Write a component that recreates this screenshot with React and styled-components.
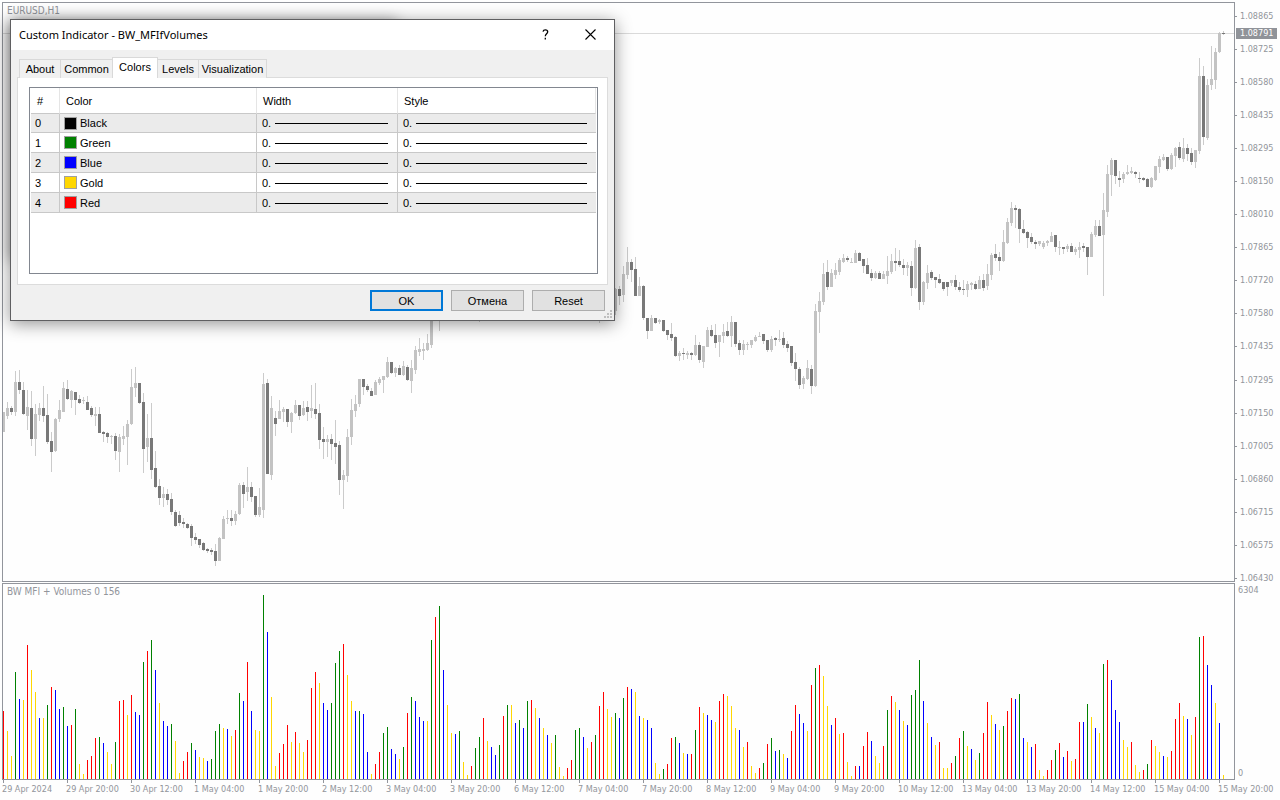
import { useState } from "react"
import styled, { createGlobalStyle, css } from "styled-components"

const STEP = 4

// each candle: direction (u / d), high, body top, body bottom, low
const CANDLES = [
  {
    start: 0,
    data: `u412,412,432,432 u402,408,416,419 d406,408,412,415 u371,382,412,416 d370,382,390,394
      d382,390,414,415 u390,407,416,430 d391,408,439,446 u404,414,439,456 u403,408,415,421
      d386,408,416,422 d394,415,442,444 d432,441,452,472 u418,419,451,452 u400,410,419,422
      u382,388,412,412 d380,389,399,400 u390,391,400,408 d392,392,400,415 d395,399,403,404
      u397,400,401,404 d396,402,410,410 d406,408,415,417 u407,414,416,426 d407,414,433,433
      d431,432,434,442 d432,433,437,443 u435,436,437,444 d433,436,451,460 u434,437,452,472
      u426,436,439,445 u420,424,437,465 u369,387,424,425 u367,383,388,397 d383,383,403,404
      d393,402,449,473 u414,438,447,462 d403,438,470,479 d451,468,487,488 d479,486,498,505
      u487,494,498,507 d489,494,500,505 d493,499,512,515 d510,512,526,527 d511,515,523,526
      d518,522,524,528 d523,524,528,529 d524,526,538,546 d533,537,540,544 d539,539,545,548
      d542,543,550,551 d548,549,551,553 d548,550,552,555 d544,551,561,566 u537,538,561,561
      u516,519,539,539 u510,518,519,524 d510,518,521,526 u511,514,521,525 u483,485,514,515
      d482,485,494,508 u467,487,492,501 d482,487,497,502 d496,496,515,517 u488,507,515,517
      u373,384,510,518 d379,383,474,474 u396,408,475,480 d411,418,424,436 u400,411,419,419
      u407,409,412,422 d409,409,422,427 u412,413,422,433 u400,405,413,414 d405,405,416,420
      u401,408,415,416 d401,407,412,421 u385,408,411,418 d383,409,414,419 d404,413,440,449
      d427,439,442,459 u435,439,442,457 d434,439,444,460 d420,443,447,464 d441,445,480,495
      u470,475,480,509 u429,437,476,482 u399,410,437,445 u395,404,411,417 u379,379,404,407
      d379,379,387,395 d384,386,390,392 d388,391,396,396 u380,382,395,395 u377,379,383,385
      u376,376,380,393 u357,362,377,378 d362,362,373,374 u367,368,373,377 d365,368,375,375
      u361,366,375,376 d365,367,380,381 u360,368,381,393 u346,350,370,374 u338,349,352,356
      u343,349,351,360 u334,343,350,351 u300,306,345,348`,
  },
  { start: 109, data: "u290,300,316,331" },
  { start: 119, data: "d296,302,312,322" },
  { start: 149, data: "u290,300,312,323" },
  { start: 152, data: "d290,300,310,321" },
  {
    start: 153,
    data: `u288,289,311,315 d286,289,296,305 u266,274,295,302 u247,262,275,279 d259,262,270,282
      d257,269,296,296 u277,286,296,296 d285,286,318,320 d318,318,331,339 u315,318,331,331
      d318,318,323,324 u319,320,322,324 d320,320,331,332 d330,330,335,340 d323,334,338,341
      d336,337,356,357 u351,353,356,361 d348,353,354,360 u351,353,355,359 d352,353,355,360
      u335,345,355,356 d342,345,360,363 u346,346,362,368 u327,330,347,347 d325,330,336,337
      d324,335,343,348 u335,335,342,357 u324,332,336,343 d322,331,336,337 u316,322,336,347
      d322,322,344,347 d340,343,350,355 u340,344,350,355 u342,344,345,350 u340,340,345,348
      u335,337,341,342 u332,336,337,337 d334,334,341,344 d340,340,350,352 u336,339,350,352
      d337,338,340,346 u330,339,340,342 d332,338,345,348 d341,344,348,352 d346,346,363,366
      d353,362,369,381 d367,369,385,389 u376,378,384,389 u360,368,379,380 d365,369,386,394
      u304,311,386,387 u292,301,312,333 u263,274,302,305 d260,272,287,290 u269,273,287,287
      u263,270,275,279 u258,260,272,275 u254,258,262,263 d256,258,260,262 u258,262,263,263
      u250,253,263,263 d252,253,261,261 d259,259,266,273 d258,265,274,274 d269,273,278,281
      u271,273,278,279 d271,273,279,279 u271,274,279,279 u256,271,276,284 u254,261,272,274
      d248,261,263,271 d250,261,265,267 d259,265,268,275 u262,265,268,276 d261,266,288,296
      u240,248,288,289 d244,247,302,310 u281,282,302,305 u265,273,283,289 d270,272,278,280
      d277,277,280,288 d274,279,283,284 d282,282,289,291 d282,282,287,296 u280,280,283,286
      d275,280,287,290 d282,287,290,292 d280,289,290,295 u281,284,290,297 u282,283,285,290
      d281,284,289,290 u276,280,289,289 d274,280,288,291 u264,274,286,290 u253,255,275,280
      d244,254,258,261 d252,257,261,271 u230,242,261,262 u218,222,243,244 u202,208,223,226
      d205,208,210,228 d208,209,229,243 d220,229,233,234 d231,232,238,248 d233,237,242,244
      d240,242,244,249 u241,241,244,246 u241,243,247,249 u240,241,243,246 u232,236,242,242
      d235,235,247,252 u241,247,248,255 d247,247,249,254 u244,246,249,252 d243,246,252,252
      u247,249,252,255 u242,247,250,258 d243,246,248,252 d247,247,257,275 u232,234,257,257
      u220,226,235,237 d220,226,236,236 u193,210,235,296 u165,174,212,217 u158,160,175,196
      d160,160,176,184 d171,178,180,187 u172,174,179,183 u165,172,174,175 u167,171,173,174
      d171,172,174,178 d172,178,179,183 d177,178,180,181 d178,179,187,187 u177,178,187,188
      u166,166,180,181 u156,159,167,173 u154,157,160,161 d157,157,169,171 u153,155,169,170
      u147,148,156,167 d142,147,158,160 u138,148,159,162 d144,148,154,161 d148,153,162,165
      u150,150,162,168 u58,76,151,154 d66,76,137,145 u79,85,138,140 u46,79,85,90
      u48,52,80,89 u32,33,52,53 d31,33,34,35`,
  },
]

// volume bars: color letter + height
const VOLUMES = `r68 y48 y23 g107 b80 y79 r134 y109 y87 b61 y61 g74 r92 b89 b70 g72 b53 r54 g70 y15
  y5 r19 r23 r41 g42 b36 y27 y15 g37 r78 r79 y64 r84 b67 b64 g117 r128 g139 b109 y76
  b58 b53 g55 y38 y6 r18 r27 g36 b29 y22 y21 b18 g20 g48 g55 y51 b50 y43 r49 g86
  b78 r117 b68 y49 y48 g184 b147 y82 y13 r26 r35 r54 y37 r47 y36 y27 r39 r91 r107 y96
  b76 b69 g76 g116 g128 r135 y104 y78 b68 g68 b65 b27 y5 r15 r27 g46 g52 b30 b25 y20
  g32 r66 g82 b78 b62 b58 y58 g139 r162 g173 b109 y74 y46 b45 g48 y17 y4 r13 g31 g42
  r61 y38 b32 b24 g34 r63 g74 y74 b56 g59 b51 g78 r79 y71 b61 y51 b44 y36 g44 y12
  y3 r11 r19 g49 g51 b42 y31 r37 g44 r73 r87 y70 y62 g66 b61 g81 r92 b90 y87 b63
  y61 b59 b51 y16 y5 g10 r15 r41 g42 b36 y26 b25 r25 g49 r72 y66 b64 b59 y57 r78
  r85 y83 y73 y51 b49 y32 r37 y13 y6 r11 g16 r35 g41 b28 g29 y25 b21 r48 r74 b65
  b56 y48 r94 g111 r114 y103 y73 b54 r61 y45 r46 y17 y3 r13 b13 r33 r47 b38 y23 y16
  r33 g69 r83 y77 b69 y58 b54 g84 g89 g119 b78 y56 b42 y34 r37 y11 y11 r16 g23 r41
  g48 y33 b30 y19 g26 r46 r77 y64 b55 y49 g53 r68 r81 b80 g85 b41 y37 b32 r35 y9
  y3 r9 r19 g29 r36 b22 r28 y18 r20 r57 b57 g75 y62 b51 y46 g115 r119 b99 b69 b57
  y39 y32 r37 y14 y7 r9 g15 r39 y33 y27 b23 y22 r28 r60 r76 y63 b60 y44 r62 g142
  r143 b114 b94 y76 b56 y4`

const BAR_COLORS = { r: "#ff0000", g: "#008000", b: "#0000ff", y: "#ffd700" }

const PRICES = [
  "1.08865", "1.08725", "1.08580", "1.08435", "1.08295", "1.08150",
  "1.08010", "1.07865", "1.07720", "1.07580", "1.07435", "1.07295",
  "1.07150", "1.07005", "1.06860", "1.06715", "1.06575", "1.06430",
]

const TIMES = [
  "29 Apr 2024", "29 Apr 20:00", "30 Apr 12:00", "1 May 04:00", "1 May 20:00",
  "2 May 12:00", "3 May 04:00", "3 May 20:00", "6 May 12:00", "7 May 04:00",
  "7 May 20:00", "8 May 12:00", "9 May 04:00", "9 May 20:00", "10 May 12:00",
  "13 May 04:00", "13 May 20:00", "14 May 12:00", "15 May 04:00", "15 May 20:00",
]

const TABS = [
  { name: "About", width: 42 },
  { name: "Common", width: 53 },
  { name: "Colors", width: 46 },
  { name: "Levels", width: 42 },
  { name: "Visualization", width: 69 },
]

const COLORS = [
  { name: "Black", value: "#000000" },
  { name: "Green", value: "#008000" },
  { name: "Blue", value: "#0000ff" },
  { name: "Gold", value: "#ffd700" },
  { name: "Red", value: "#ff0000" },
]

const Candle = ({ index, source }) => {
  const [high, top, bottom, low] = source.slice(1).split(",").map(Number)
  const x = index * STEP
  return (
    <g>
      <rect x={x} y={high} width="1" height={low - high} fill="#cbcbcb" />
      <rect
        x={x - 1}
        y={top}
        width="3"
        height={bottom - top}
        fill={source[0] === "u" ? "#c3c3c3" : "#787878"}
      />
    </g>
  )
}

const PriceChart = () => (
  <ChartSvg $height={578} aria-label="EURUSD hourly candles">
    <g transform="translate(0 -3)">
      <rect x="0" y="33" width="100%" height="1" fill="#dadada" />
      {CANDLES.map(({ start, data }) =>
        data
          .split(/\s+/)
          .map((source, i) => <Candle key={start + i} index={start + i} source={source} />)
      )}
    </g>
  </ChartSvg>
)

const VolumeChart = () => (
  <ChartSvg $height={195} aria-label="BW MFI volumes">
    {VOLUMES.split(/\s+/).map((bar, i) => {
      const height = Number(bar.slice(1))
      return (
        <rect
          key={i}
          x={i * STEP}
          y={195 - height}
          width="1"
          height={height}
          fill={BAR_COLORS[bar[0]]}
        />
      )
    })}
  </ChartSvg>
)

const IndicatorDialog = () => {
  const [tab, setTab] = useState("Colors")

  return (
    <Dialog role="dialog" aria-labelledby="dialog-title">
      <TitleBar>
        <Title id="dialog-title">Custom Indicator - BW_MFIfVolumes</Title>
        <TitleButton type="button" aria-label="Help">
          <svg width="7" height="11" viewBox="0 0 7 11" fill="none" stroke="#000" strokeWidth="1.3">
            <path d="M1 2.6C1.3 1.3 2.1.8 3.3.8 4.8.8 5.7 1.6 5.7 2.8 5.7 4.7 3.3 4.9 3.3 7.3" />
            <path d="M3.3 8.8v1.7" />
          </svg>
        </TitleButton>
        <TitleButton type="button" aria-label="Close">
          <svg width="11" height="11" viewBox="0 0 11 11" fill="none" stroke="#000" strokeWidth="1.1">
            <path d="M.5.5l10 10M10.5.5l-10 10" />
          </svg>
        </TitleButton>
      </TitleBar>
      <DialogBody>
        <TabList role="tablist">
          {TABS.map(({ name, width }) => (
            <Tab
              key={name}
              type="button"
              role="tab"
              aria-selected={tab === name}
              $active={tab === name}
              $width={width}
              onClick={() => setTab(name)}
            >
              {name}
            </Tab>
          ))}
        </TabList>
        <TabPanel role="tabpanel">
          <TableBox>
            <Table>
              <colgroup>
                <Col $width={29} />
                <Col $width={197} />
                <Col $width={141} />
                <Col />
              </colgroup>
              <thead>
                <tr>
                  <HeadCell>#</HeadCell>
                  <HeadCell>Color</HeadCell>
                  <HeadCell>Width</HeadCell>
                  <HeadCell>Style</HeadCell>
                </tr>
              </thead>
              <tbody>
                {COLORS.map(({ name, value }, i) => (
                  <Row key={name}>
                    <Cell>{i}</Cell>
                    <Cell>
                      <CellContent $gap={3}>
                        <Swatch $color={value} />
                        {name}
                      </CellContent>
                    </Cell>
                    <Cell>
                      <CellContent $gap={4} $indent={1}>
                        0.
                        <LineSample />
                      </CellContent>
                    </Cell>
                    <Cell>
                      <CellContent $gap={4} $indent={1}>
                        0.
                        <LineSample />
                      </CellContent>
                    </Cell>
                  </Row>
                ))}
              </tbody>
            </Table>
          </TableBox>
        </TabPanel>
        <Footer>
          <DialogButton type="button" $primary>
            OK
          </DialogButton>
          <DialogButton type="button">Отмена</DialogButton>
          <DialogButton type="button">Reset</DialogButton>
        </Footer>
      </DialogBody>
      <Grip width="8" height="8" viewBox="0 0 8 8" fill="#bfbfbf" aria-hidden="true">
        <path d="M6 0h2v2H6zM3 3h2v2H3zM6 3h2v2H6zM0 6h2v2H0zM3 6h2v2H3zM6 6h2v2H6z" />
      </Grip>
    </Dialog>
  )
}

export default function App() {
  return (
    <>
      <GlobalStyle />
      <Terminal>
        <Pane>
          <PaneLabel>EURUSD,H1</PaneLabel>
          <PriceChart />
        </Pane>
        <PriceAxis>
          <PriceList>
            {PRICES.map((price) => (
              <Price key={price}>{price}</Price>
            ))}
          </PriceList>
          <CurrentPrice>1.08791</CurrentPrice>
        </PriceAxis>
        <Pane>
          <PaneLabel>BW MFI + Volumes 0 156</PaneLabel>
          <VolumeChart />
        </Pane>
        <VolumeAxis>
          <span>6304</span>
          <span>0</span>
        </VolumeAxis>
        <TimeAxis>
          {TIMES.map((time) => (
            <Time key={time}>{time}</Time>
          ))}
        </TimeAxis>
        <ParentShadow />
        <IndicatorDialog />
      </Terminal>
    </>
  )
}

const GlobalStyle = createGlobalStyle`
  * {
    box-sizing: border-box;
  }
  body {
    margin: 0;
    background: #fefefe;
  }
`

const chartText = css`
  font-family: "DejaVu Sans Condensed", "DejaVu Sans", sans-serif;
  font-size: 9px;
  line-height: 11px;
  color: #92959b;
`

const Terminal = styled.main`
  position: relative;
  display: grid;
  grid-template-columns: minmax(0, 1fr) 45px;
  row-gap: 1px;
  padding: 2px 0 0 2px;
  min-height: 100vh;
  align-content: start;
  overflow: hidden;
  ${chartText}
`
const Pane = styled.section`
  position: relative;
  border: 1px solid #92959c;
`
const PaneLabel = styled.div`
  position: absolute;
  top: 2px;
  left: 4px;
  font-size: 10px;
  line-height: 12px;
`
const ChartSvg = styled.svg`
  display: block;
  width: 100%;
  height: ${(props) => props.$height}px;
  shape-rendering: crispEdges;
`
const PriceAxis = styled.aside`
  position: relative;
  padding-top: 9px;
`
const PriceList = styled.ul`
  display: flex;
  flex-direction: column;
  justify-content: space-between;
  height: 573px;
  margin: 0 0 -2px;
  padding: 0;
  list-style: none;
`
const Price = styled.li`
  display: flex;
  align-items: center;
  gap: 3px;
  &::before {
    content: "";
    width: 2px;
    height: 1px;
    background: #92959c;
  }
`
const CurrentPrice = styled.div`
  position: absolute;
  top: 26px;
  left: 1px;
  width: 41px;
  padding-left: 4px;
  background: #909399;
  color: #ffffff;
`
const VolumeAxis = styled.aside`
  display: flex;
  flex-direction: column;
  justify-content: space-between;
  padding: 2px 0 1px 3px;
`
const TimeAxis = styled.div`
  grid-column: 1 / -1;
  display: flex;
  margin-top: -1px;
  overflow: hidden;
`
const Time = styled.div`
  flex: none;
  width: 64px;
  white-space: nowrap;
  &::before {
    content: "";
    display: block;
    width: 1px;
    height: 3px;
    margin: 0 0 1px 1px;
    background: #92959c;
  }
`

// shadow of the smaller window that the dialog was opened from
const ParentShadow = styled.div`
  position: absolute;
  top: 19px;
  left: 10px;
  width: 387px;
  height: 240px;
  box-shadow: 0 2px 14px rgba(0, 0, 0, 0.4);
`
const Dialog = styled.section`
  position: absolute;
  top: 19px;
  left: 10px;
  width: 605px;
  border: 1px solid #5f5f61;
  background: #f0f0f0;
  box-shadow: 0 3px 16px rgba(0, 0, 0, 0.42);
  font-family: "Liberation Sans", Arial, sans-serif;
  font-size: 11px;
  line-height: 14px;
  color: #000000;
`
const TitleBar = styled.header`
  display: flex;
  height: 30px;
  padding: 0 1px 0 8px;
  background: #ffffff;
`
const Title = styled.h1`
  flex: 1;
  margin: 0;
  font: 400 11px/30px "Noto Sans", "Open Sans", sans-serif;
`
const TitleButton = styled.button`
  display: flex;
  align-items: center;
  justify-content: center;
  width: 45px;
  height: 29px;
  padding: 0;
  border: 0;
  background: none;
`
const DialogBody = styled.div`
  padding: 7px 6px 9px;
`
const TabList = styled.div`
  display: flex;
  align-items: flex-end;
  height: 21px;
  padding-left: 2px;
`
const Tab = styled.button`
  width: ${(props) => props.$width}px;
  height: 19px;
  margin-right: -1px;
  margin-bottom: 0;
  padding: 0;
  border: 1px solid #d9d9d9;
  border-bottom: 0;
  background: #f0f0f0;
  font: inherit;
  color: inherit;
  ${(props) =>
    props.$active &&
    css`
      z-index: 1;
      height: 21px;
      padding-bottom: 2px;
      background: #ffffff;
    `}
`
const TabPanel = styled.div`
  margin-top: -1px;
  padding: 9px 9px 10px 11px;
  border: 1px solid #dcdcdc;
  background: #ffffff;
`
const TableBox = styled.div`
  min-height: 187px;
  padding: 0 1px;
  border: 1px solid #828790;
`
const Table = styled.table`
  width: 100%;
  table-layout: fixed;
  border-collapse: separate;
  border-spacing: 0;
`
const Col = styled.col`
  width: ${(props) => (props.$width ? `${props.$width}px` : "auto")};
`
const HeadCell = styled.th`
  height: 26px;
  padding: 0 6px;
  border-right: 1px solid #e5e5e5;
  border-bottom: 1px solid #c8c8c8;
  font-weight: 400;
  text-align: left;
`
const Cell = styled.td`
  height: 20px;
  padding: 0 4px;
  border-right: 1px solid #c8c8c8;
  border-bottom: 1px solid #c8c8c8;
  &:last-child {
    border-right: 0;
  }
`
const Row = styled.tr`
  &:nth-child(odd) {
    background: #ebebeb;
  }
  &:first-child ${Cell} {
    height: 19px;
  }
`
const CellContent = styled.div`
  display: flex;
  align-items: center;
  gap: ${(props) => props.$gap}px;
  padding-left: ${(props) => props.$indent || 0}px;
`
const Swatch = styled.span`
  width: 13px;
  height: 13px;
  border: 1px solid #a0a0a0;
  background: ${(props) => props.$color};
`
const LineSample = styled.span`
  flex: 1;
  height: 1px;
  margin: 1px 5px 0 0;
  background: #000000;
`
const Footer = styled.footer`
  display: flex;
  justify-content: flex-end;
  gap: 8px;
  padding: 5px 3px 0 0;
`
const DialogButton = styled.button`
  width: 73px;
  height: 21px;
  padding: 0;
  border: ${(props) => (props.$primary ? "2px solid #0078d7" : "1px solid #adadad")};
  background: #e1e1e1;
  font: inherit;
  color: inherit;
`
const Grip = styled.svg`
  position: absolute;
  right: 2px;
  bottom: 2px;
`
